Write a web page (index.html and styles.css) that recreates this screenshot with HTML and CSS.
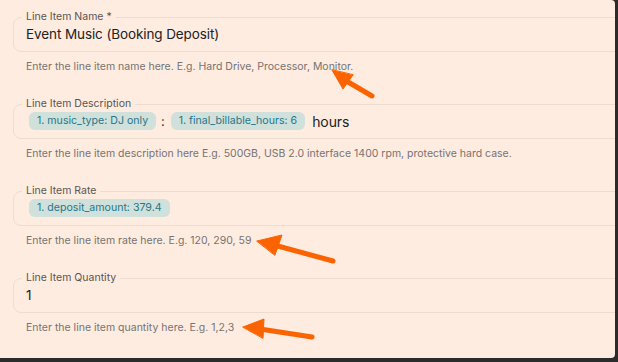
FILE: index.html
```html
<!DOCTYPE html>
<html lang="en">
<head>
    <meta charset="UTF-8">
    <title>Line Item</title>
    <link rel="stylesheet" href="styles.css">
</head>
<body>
    <div class="panel">
        <div class="group">
            <fieldset class="field">
                <legend>Line Item Name *</legend>
                <div class="value">Event Music (Booking Deposit)</div>
            </fieldset>
            <p class="helper">Enter the line item name here. E.g. Hard Drive, Processor, Monitor.</p>
        </div>
        <div class="group">
            <fieldset class="field">
                <legend>Line Item Description</legend>
                <div class="value">
                    <span class="chip">1. music_type: DJ only</span>
                    <span class="sep">:</span>
                    <span class="chip">1. final_billable_hours: 6</span>
                    <span class="plain">hours</span>
                </div>
            </fieldset>
            <p class="helper">Enter the line item description here E.g. 500GB, USB 2.0 interface 1400 rpm, protective hard case.</p>
        </div>
        <div class="group">
            <fieldset class="field">
                <legend>Line Item Rate</legend>
                <div class="value">
                    <span class="chip">1. deposit_amount: 379.4</span>
                </div>
            </fieldset>
            <p class="helper">Enter the line item rate here. E.g. 120, 290, 59</p>
        </div>
        <div class="group">
            <fieldset class="field">
                <legend>Line Item Quantity</legend>
                <div class="value">1</div>
            </fieldset>
            <p class="helper">Enter the line item quantity here. E.g. 1,2,3</p>
        </div>

        <!-- annotation arrows -->
        <svg class="arrows" width="615" height="358" viewBox="0 0 615 358">
            <g stroke="#fb6300" stroke-width="5" stroke-linecap="round" fill="#fb6300">
                <line x1="343" y1="79" x2="372" y2="96"/>
                <polygon points="332,70 343,89 353,75" stroke-width="1"/>
                <line x1="274" y1="245" x2="333" y2="261"/>
                <polygon points="257,241 282,235 275,255" stroke-width="1"/>
                <line x1="260" y1="329" x2="312" y2="337"/>
                <polygon points="243,327 264,319 263,338" stroke-width="1"/>
            </g>
        </svg>
    </div>
</body>
</html>
```

FILE: styles.css
```css
/* page frame */
html {
    background-color: #2b2b2b;
}

body {
    margin: 0;
    font-family: Inter, "Noto Sans", sans-serif;
}

.panel {
    position: relative;
    width: 615px;
    height: 358px;
    background-color: #feece1;
    border-radius: 0 4px 4px 0;
    overflow: hidden;
    padding: 11px 0 0 13px;
    box-sizing: border-box;
}

.group {
    height: 87px;
}

.field {
    width: 660px;
    margin: 0;
    padding: 0 12px 6px;
    border: 1px solid #efdcd0;
    border-radius: 8px;
    box-sizing: border-box;
}

.field legend {
    padding: 0 4px;
    margin-left: -4px;
    font-size: 10.5px;
    line-height: 12px;
    color: #5a5550;
}

.value {
    display: flex;
    align-items: center;
    height: 22px;
    font-size: 13.5px;
    letter-spacing: -0.1px;
    color: #222;
}

.chip {
    display: inline-block;
    background-color: #d0e0da;
    color: #27778a;
    font-size: 10.6px;
    letter-spacing: 0;
    line-height: 18px;
    padding: 0 8px;
    border-radius: 6px;
    margin-left: 3px;
}

.sep {
    margin: 0 3px 0 5px;
    font-size: 13px;
    color: #333;
}

.plain {
    margin-left: 7px;
    font-size: 14px;
    color: #222;
}

.helper {
    margin: 8px 0 0 13px;
    font-size: 10.5px;
    line-height: 14px;
    color: #777370;
}

.arrows {
    position: absolute;
    top: 0;
    left: 0;
}
```
